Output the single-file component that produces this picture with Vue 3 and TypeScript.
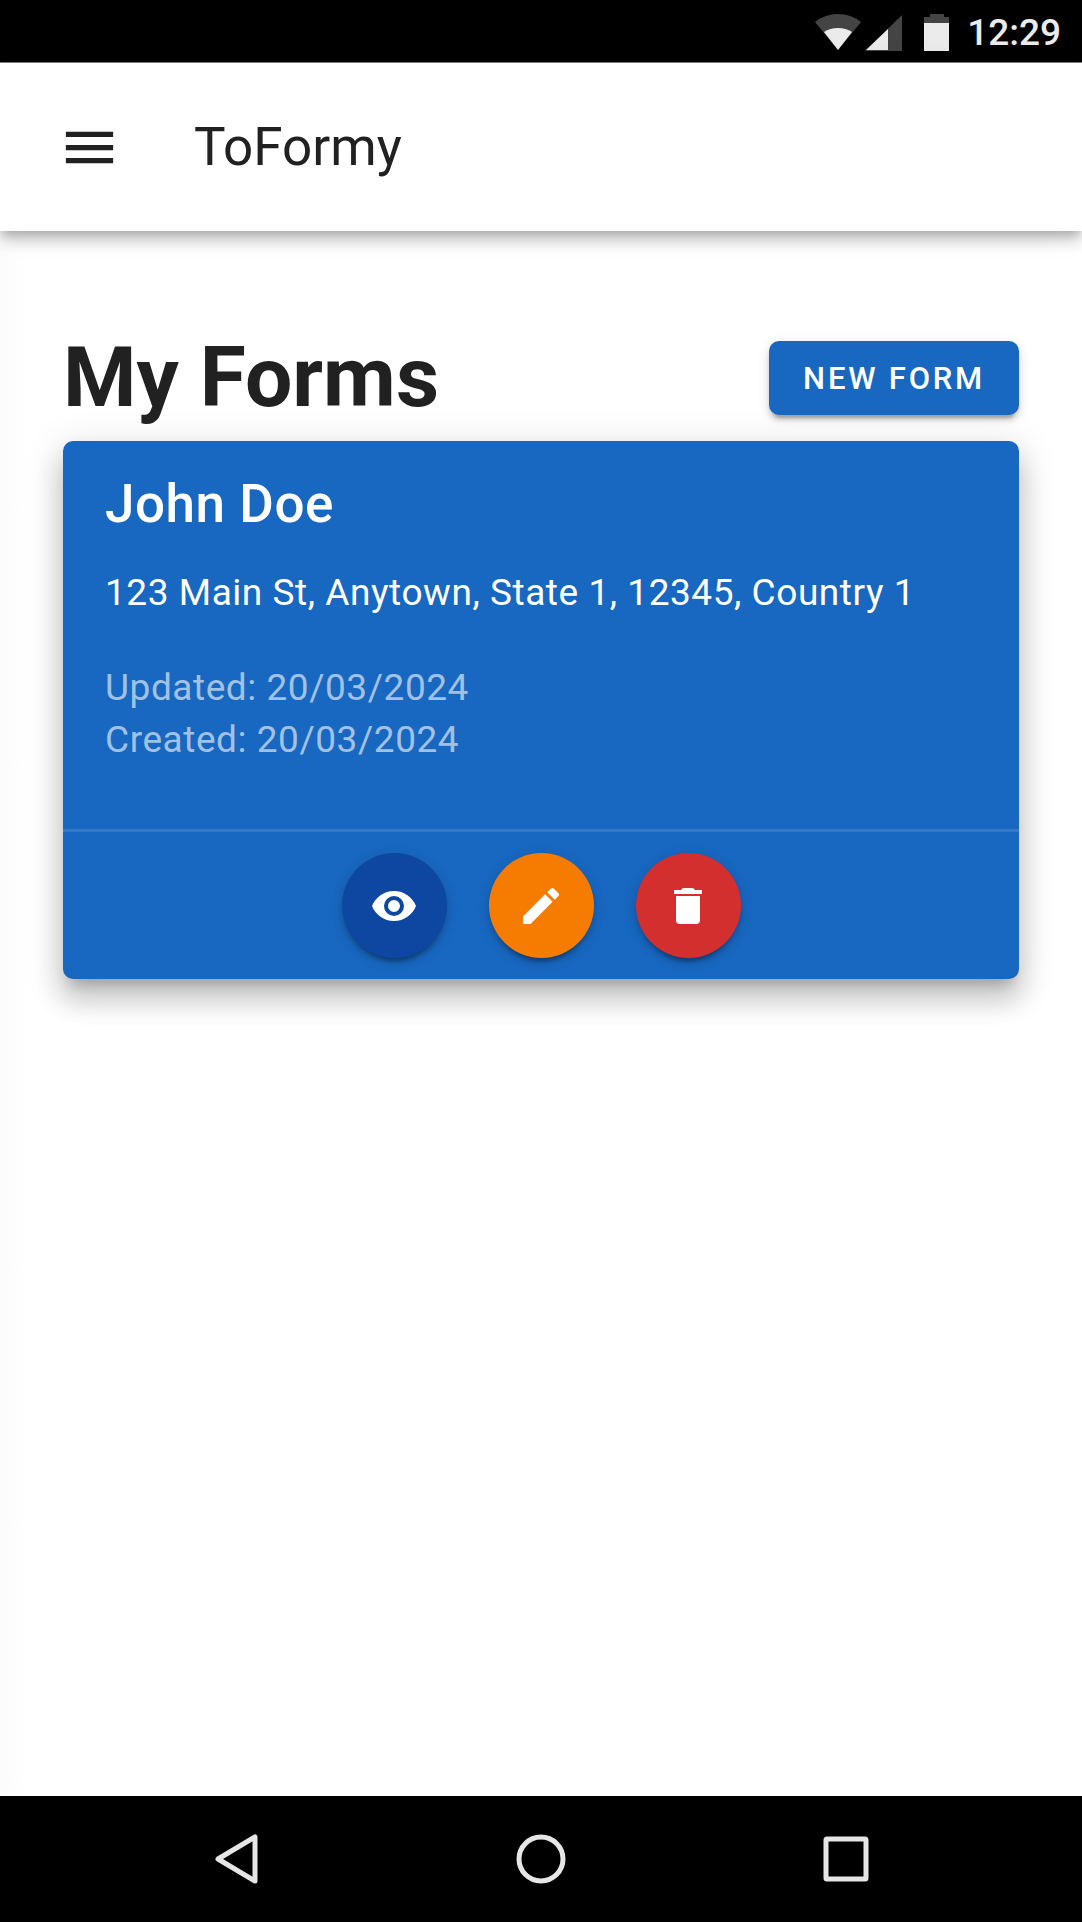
<script setup lang="ts">
interface FormEntry {
  id: number
  name: string
  address: string
  updated: string
  created: string
}

interface CardAction {
  label: string
  tone: string
  icon: string
}

const forms: FormEntry[] = [
  {
    id: 1,
    name: 'John Doe',
    address: '123 Main St, Anytown, State 1, 12345, Country 1',
    updated: '20/03/2024',
    created: '20/03/2024',
  },
]

const actions: CardAction[] = [
  {
    label: 'View form',
    tone: 'view',
    icon: 'M12,9A3,3 0 0,0 9,12A3,3 0 0,0 12,15A3,3 0 0,0 15,12A3,3 0 0,0 12,9M12,17A5,5 0 0,1 7,12A5,5 0 0,1 12,7A5,5 0 0,1 17,12A5,5 0 0,1 12,17M12,4.5C7,4.5 2.73,7.61 1,12C2.73,16.39 7,19.5 12,19.5C17,19.5 21.27,16.39 23,12C21.27,7.61 17,4.5 12,4.5Z',
  },
  {
    label: 'Edit form',
    tone: 'edit',
    icon: 'M20.71,7.04C21.1,6.65 21.1,6 20.71,5.63L18.37,3.29C18,2.9 17.35,2.9 16.96,3.29L15.12,5.12L18.87,8.87M3,17.25V21H6.75L17.81,9.93L14.06,6.18L3,17.25Z',
  },
  {
    label: 'Delete form',
    tone: 'delete',
    icon: 'M19,4H15.5L14.5,3H9.5L8.5,4H5V6H19M6,19A2,2 0 0,0 8,21H16A2,2 0 0,0 18,19V7H6V19Z',
  },
]
</script>

<template>
  <div class="screen">
    <div class="status-bar">
      <svg class="status-icons" viewBox="0 0 136 40" aria-hidden="true">
        <path fill="#444" d="M23 37 L0 9 Q10 1 23 1 Q36 1 46 9 Z" />
        <path fill="#ebebeb" d="M23 37 L9 19 Q15 15 23 15 Q31 15 37 19 Z" />
        <path fill="#444" d="M87 2 V38 H50 Z" />
        <path fill="#ebebeb" d="M73 16 V37 H51 Z" />
        <path fill="#444" d="M109 10 V4 H115 V1 H129 V4 H134 V10 Z" />
        <path fill="#ebebeb" d="M109 10 H134 V38 H109 Z" />
      </svg>
      <time class="clock">12:29</time>
    </div>

    <header class="app-bar">
      <button class="menu-button" type="button" aria-label="Open menu">
        <svg viewBox="0 0 24 24" aria-hidden="true">
          <path fill="currentColor" d="M3,6H21V8H3V6M3,11H21V13H3V11M3,16H21V18H3V16Z" />
        </svg>
      </button>
      <span class="brand">ToFormy</span>
    </header>

    <main class="content">
      <div class="heading-row">
        <h1>My Forms</h1>
        <button class="new-form" type="button">NEW FORM</button>
      </div>

      <article v-for="form in forms" :key="form.id" class="card">
        <h2 class="card-title">{{ form.name }}</h2>
        <p class="card-address">{{ form.address }}</p>
        <div class="card-dates">
          <p>Updated: {{ form.updated }}</p>
          <p>Created: {{ form.created }}</p>
        </div>
        <div class="card-actions">
          <button
            v-for="action in actions"
            :key="action.tone"
            class="fab"
            :class="action.tone"
            type="button"
            :aria-label="action.label"
          >
            <svg viewBox="0 0 24 24" aria-hidden="true">
              <path fill="currentColor" :d="action.icon" />
            </svg>
          </button>
        </div>
      </article>
    </main>

    <nav class="system-nav" aria-label="System">
      <button type="button" aria-label="Back">
        <svg viewBox="0 0 56 56" aria-hidden="true">
          <path d="M47 6 V50 L10 28 Z" />
        </svg>
      </button>
      <button type="button" aria-label="Home">
        <svg viewBox="0 0 56 56" aria-hidden="true">
          <circle cx="28" cy="28" r="22" />
        </svg>
      </button>
      <button type="button" aria-label="Recent apps">
        <svg viewBox="0 0 56 56" aria-hidden="true">
          <rect x="8" y="8" width="40" height="40" rx="1" />
        </svg>
      </button>
    </nav>
  </div>
</template>

<style>
body {
  margin: 0;
  background: #fff;
}
</style>

<style scoped>
.screen {
  display: flex;
  flex-direction: column;
  min-height: 100vh;
  overflow: hidden;
  background: #fff;
  color: #212121;
  font-family: Roboto, "Liberation Sans", sans-serif;
}

button {
  display: flex;
  align-items: center;
  justify-content: center;
  margin: 0;
  padding: 0;
  border: 0;
  background: none;
  color: inherit;
  font-family: inherit;
  cursor: pointer;
}

h1,
h2,
p {
  margin: 0;
}

.status-bar {
  display: flex;
  align-items: center;
  justify-content: flex-end;
  gap: 16px;
  box-sizing: border-box;
  height: 63px;
  padding: 4px 21px 0 0;
  border-bottom: 1px solid #808080;
  background: #000;
  color: #ebebeb;
}

.status-icons {
  width: 136px;
  height: 40px;
}

.clock {
  font-size: 37px;
  font-weight: 500;
  line-height: 52px;
}

.app-bar {
  position: relative;
  z-index: 1;
  display: flex;
  align-items: center;
  gap: 42px;
  height: 168px;
  padding: 0 26px;
  background: #fff;
  box-shadow:
    0 5px 10px -3px rgba(0, 0, 0, 0.2),
    0 10px 13px 0 rgba(0, 0, 0, 0.14),
    0 3px 26px 0 rgba(0, 0, 0, 0.12);
}

.menu-button {
  width: 126px;
  height: 126px;
}

.menu-button svg {
  width: 63px;
  height: 63px;
}

.brand {
  font-size: 53px;
  line-height: 84px;
}

.content {
  flex: 1;
  padding: 84px 63px;
  background: linear-gradient(to right, #fcfcfc, #fff 28px);
}

.heading-row {
  display: flex;
  align-items: center;
  justify-content: space-between;
}

h1 {
  font-size: 84px;
  font-weight: 700;
  line-height: 126px;
}

.new-form {
  height: 74px;
  padding: 0 34px;
  border-radius: 10px;
  background: #1867c0;
  color: #fff;
  font-size: 31px;
  font-weight: 500;
  letter-spacing: 0.09em;
  box-shadow:
    0 8px 3px -5px rgba(0, 0, 0, 0.2),
    0 5px 5px 0 rgba(0, 0, 0, 0.14),
    0 3px 13px 0 rgba(0, 0, 0, 0.12);
}

.card {
  border-radius: 10px;
  background: #1867c0;
  color: #fff;
  box-shadow:
    0 13px 13px -8px rgba(0, 0, 0, 0.2),
    0 21px 26px 3px rgba(0, 0, 0, 0.14),
    0 8px 37px 5px rgba(0, 0, 0, 0.12);
}

.card-title {
  padding: 21px 42px;
  font-size: 53px;
  font-weight: 500;
  line-height: 84px;
  letter-spacing: 0.01em;
}

.card-address,
.card-dates {
  font-size: 37px;
  line-height: 52px;
  letter-spacing: 0.015em;
}

.card-address {
  padding: 0 42px;
}

.card-dates {
  padding: 43px 42px 63px;
  color: rgba(255, 255, 255, 0.6);
}

.card-actions {
  display: flex;
  justify-content: center;
  gap: 42px;
  padding: 21px;
  border-top: 3px solid rgba(255, 255, 255, 0.12);
}

.fab {
  width: 105px;
  height: 105px;
  border-radius: 50%;
  color: #fff;
  box-shadow:
    0 8px 3px -5px rgba(0, 0, 0, 0.2),
    0 5px 5px 0 rgba(0, 0, 0, 0.14),
    0 3px 13px 0 rgba(0, 0, 0, 0.12);
}

.fab svg {
  width: 48px;
  height: 48px;
}

.view {
  background: #0d47a1;
}

.edit {
  background: #f57c00;
}

.delete {
  background: #d32f2f;
}

.system-nav {
  display: flex;
  align-items: center;
  justify-content: center;
  gap: 179px;
  height: 126px;
  background: #000;
}

.system-nav button {
  width: 126px;
  height: 126px;
}

.system-nav svg {
  width: 56px;
  height: 56px;
  fill: none;
  stroke: #e6e6e6;
  stroke-width: 5;
  stroke-linejoin: round;
}
</style>
